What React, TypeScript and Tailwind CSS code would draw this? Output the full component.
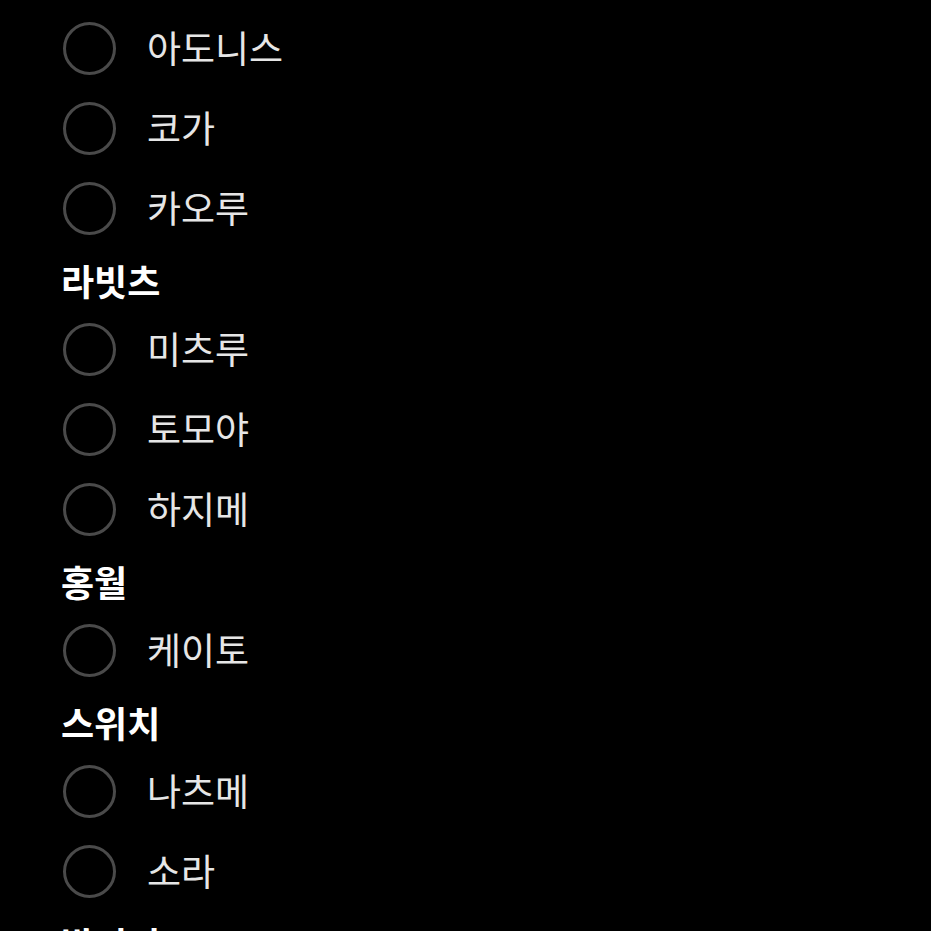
import React from "react";

type Section = { title?: string; items: string[] };

const sections: Section[] = [
  { items: ["아도니스", "코가", "카오루"] },
  { title: "라빗츠", items: ["미츠루", "토모야", "하지메"] },
  { title: "홍월", items: ["케이토"] },
  { title: "스위치", items: ["나츠메", "소라"] },
  { title: "발키리", items: [] },
];

const font = { fontFamily: '"Noto Sans CJK KR", "Noto Sans", sans-serif' };

export default function App() {
  return (
    <div className="w-[931px] h-[931px] bg-black overflow-hidden" style={font}>
      <div className="pt-[8px] flex flex-col">
        {sections.map((s, i) => (
          <div key={i} className="flex flex-col">
            {s.title && (
              <div className="h-[61px] pt-[15px] pl-[61px] text-[36px] leading-[34px] font-bold text-white">
                {s.title}
              </div>
            )}
            {s.items.map((it) => (
              <div key={it} className="h-[80px] flex items-center pl-[63px]">
                <div className="w-[53px] h-[53px] rounded-full border-[3px] border-[#4a4a4a] shrink-0" />
                <span className="ml-[31px] mb-[1px] text-[37px] leading-none text-[#e6e6e6]">{it}</span>
              </div>
            ))}
          </div>
        ))}
      </div>
    </div>
  );
}
